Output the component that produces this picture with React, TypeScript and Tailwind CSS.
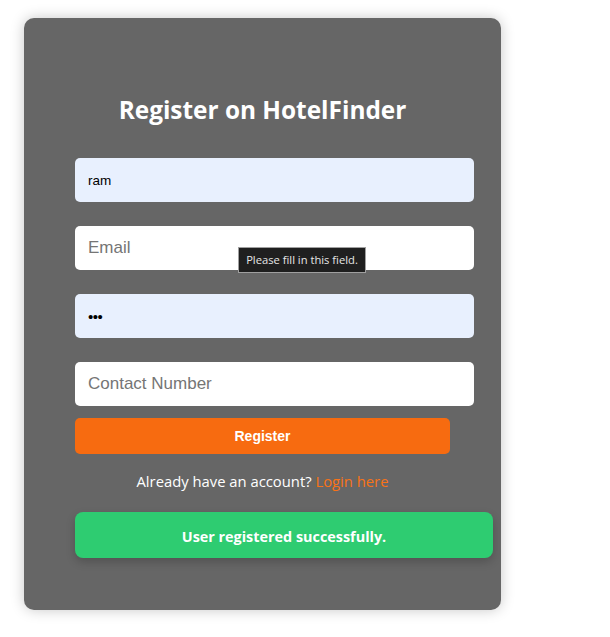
import React from 'react';

export default function App() {
  return (
    <div className="min-h-[637px] w-[610px] bg-white pt-[18px] pl-[24px]">
      <div className="relative w-[477px] rounded-[10px] bg-[#666666] px-[51px] pt-[76px] pb-[52px] shadow-[0_0_14px_rgba(0,0,0,0.22)]">
        <h2 className="mb-[32px] text-center text-[24.4px] leading-[32px] font-bold text-white [font-family:'Open_Sans',sans-serif]">
          Register on HotelFinder
        </h2>
        <form className="flex flex-col" onSubmit={(e) => e.preventDefault()}>
          <input
            readOnly
            value="ram"
            className="mb-[24px] h-[44px] w-[399px] rounded-[5px] bg-[#e8f0fe] px-[13px] text-[13.5px] text-black outline-none [font-family:'Liberation_Sans',Arial,sans-serif]"
          />
          <input
            readOnly
            placeholder="Email"
            className="mb-[24px] h-[44px] w-[399px] rounded-[5px] bg-white px-[13px] text-[17px] text-black outline-none placeholder:text-[#757575] [font-family:'Liberation_Sans',Arial,sans-serif]"
          />
          <input
            readOnly
            value="•••"
            className="mb-[24px] h-[44px] w-[399px] rounded-[5px] bg-[#e8f0fe] px-[13px] text-[15px] tracking-[-0.5px] text-black outline-none [font-family:'Liberation_Sans',Arial,sans-serif]"
          />
          <input
            readOnly
            placeholder="Contact Number"
            className="h-[44px] w-[399px] rounded-[5px] bg-white px-[13px] text-[17px] text-black outline-none placeholder:text-[#757575] [font-family:'Liberation_Sans',Arial,sans-serif]"
          />
          <button
            type="submit"
            className="mt-[12px] h-[36px] w-[375px] rounded-[5px] bg-[#f76b10] text-[14px] font-bold text-white [font-family:'Liberation_Sans',Arial,sans-serif]"
          >
            Register
          </button>
        </form>
        <p className="mt-[15px] text-center text-[14.8px] leading-[24px] text-white [font-family:'Open_Sans',sans-serif]">
          Already have an account?{' '}
          <a href="#" className="text-[#f97316]">
            Login here
          </a>
        </p>
        <div className="mt-[19px] flex h-[46px] w-[418px] items-center justify-center rounded-[8px] bg-[#2ecc71] pt-[3px] text-[14.4px] font-bold text-white shadow-[0_4px_10px_rgba(0,0,0,0.2)] [font-family:'Open_Sans',sans-serif]">
          User registered successfully.
        </div>

        <div className="absolute top-[229px] left-[214px] flex h-[26px] w-[128px] items-center justify-center border border-[#a0a0a0] bg-[#1f1f1f] text-[11.2px] text-[#e6e6e6] [font-family:'Open_Sans',sans-serif]">
          Please fill in this field.
        </div>
      </div>
    </div>
  );
}
